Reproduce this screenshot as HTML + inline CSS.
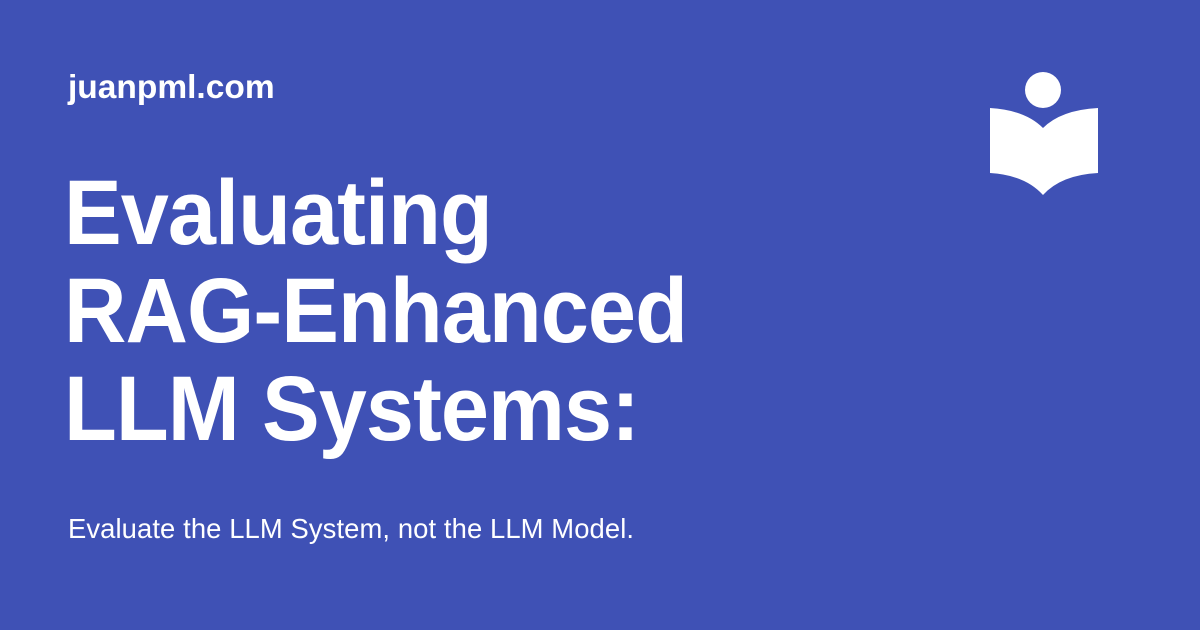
<!DOCTYPE html>
<html><head><meta charset="utf-8"><style>
html,body{margin:0;padding:0}
body{width:1200px;height:630px;background:#3f51b5;position:relative;overflow:hidden;font-family:"Liberation Sans",sans-serif;color:#fff}
.site{position:absolute;left:68px;top:69px;font-size:33.5px;font-weight:bold}
.title{position:absolute;left:64px;top:164px;font-size:92px;font-weight:bold;line-height:98px;letter-spacing:-1px;transform:scaleX(0.94);transform-origin:0 0;white-space:nowrap}
.sub{position:absolute;left:68px;top:513px;font-size:27.4px;letter-spacing:0.1px}
svg{position:absolute;left:0;top:0}
</style></head><body>
<div class="site">juanpml.com</div>
<div class="title">Evaluating<br>RAG-Enhanced<br>LLM Systems:</div>
<div class="sub">Evaluate the LLM System, not the LLM Model.</div>
<svg width="1200" height="630"><circle cx="1043" cy="90" r="18" fill="#fff"/>
<path d="M990 108 Q1025 110 1043 128 Q1061 110 1098 108 L1098 173 Q1061 175 1043 195 Q1025 175 990 173 Z" fill="#fff"/></svg>
</body></html>
